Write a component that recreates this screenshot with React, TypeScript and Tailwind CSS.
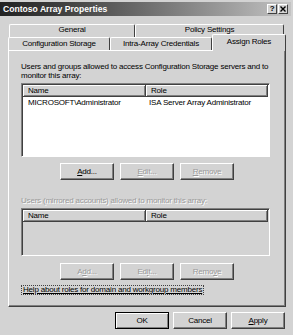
import React from "react";

const face = "bg-[#d3d3d3]";

type BtnProps = {
  children: React.ReactNode;
  disabled?: boolean;
  isDefault?: boolean;
};

const Btn = ({ children, disabled, isDefault }: BtnProps) => {
  const frame = isDefault
    ? "border border-black shadow-[inset_1px_1px_#fff,inset_-1px_-1px_#808080]"
    : "border border-t-white border-l-white border-r-[#404040] border-b-[#404040] shadow-[inset_-1px_-1px_#808080]";
  return (
    <div
      className={`w-[54px] h-[17px] ${face} ${frame} flex items-center justify-center leading-none ${
        disabled ? "text-[#9a9a9a] [text-shadow:1px_1px_0_#fff]" : "text-black"
      }`}
    >
      {children}
    </div>
  );
};

const U = ({ children }: { children: React.ReactNode }) => (
  <span className="underline underline-offset-1">{children}</span>
);

const HeaderCell = ({ label, w }: { label: string; w: string }) => (
  <div
    className={`${w} h-[12px] ${face} border-r border-b border-r-[#404040] border-b-[#404040] shadow-[inset_1px_1px_#fff,inset_-1px_-1px_#808080] flex items-center pl-[5px] leading-none`}
  >
    {label}
  </div>
);

const ListView = ({
  h,
  white,
  rows,
}: {
  h: string;
  white?: boolean;
  rows: [string, string][];
}) => (
  <div
    className={`w-[249px] ${h} border border-t-[#808080] border-l-[#808080] border-r-white border-b-white shadow-[inset_1px_1px_#404040] p-[1px] ${
      white ? "bg-white" : face
    }`}
  >
    <div className="flex">
      <HeaderCell label="Name" w="w-[123px]" />
      <HeaderCell label="Role" w="w-[122px]" />
    </div>
    {rows.map(([name, role]) => (
      <div key={name} className="flex h-[11px] items-center leading-none">
        <div className="w-[123px] pl-[5px]">{name}</div>
        <div className="pl-[3px]">{role}</div>
      </div>
    ))}
  </div>
);

const Tab = ({ label, w, h = "h-[13px]" }: { label: string; w: string; h?: string }) => (
  <div
    className={`${w} ${h} ${face} border-t border-l border-r border-t-white border-l-white border-r-[#404040] rounded-t-[2px] flex items-center justify-center leading-none`}
  >
    {label}
  </div>
);

export default function App() {
  return (
    <div
      className={`w-[293px] h-[335px] ${face} pt-[2px] overflow-hidden font-['Liberation_Sans',Arial,sans-serif] text-[8px] tracking-[-0.2px] text-black`}
    >
      {/* title bar */}
      <div className="h-[14px] w-[291px] bg-linear-to-r from-[#222222] to-[#c4c4c4] flex items-center justify-between pl-[3px] pr-[3px]">
        <span className="text-white font-bold text-[8.6px] tracking-normal leading-none">
          Contoso Array Properties
        </span>
        <div className="flex gap-[1px]">
          <div className={`w-[10px] h-[10px] ${face} border border-t-white border-l-white border-r-[#404040] border-b-[#404040] flex items-center justify-center text-[8px] font-bold leading-none`}>
            ?
          </div>
          <div className={`w-[10px] h-[10px] ${face} border border-t-white border-l-white border-r-[#404040] border-b-[#404040] flex items-center justify-center`}>
            <svg width="6" height="6" viewBox="0 0 6 6">
              <path d="M0.5 0.5 L5.5 5.5 M5.5 0.5 L0.5 5.5" stroke="#000" strokeWidth="1.4" />
            </svg>
          </div>
        </div>
      </div>

      {/* tabs, back row */}
      <div className="mt-[8px] ml-[9px] flex">
        <Tab label="General" w="w-[126px]" h="h-[13px] pb-[3px]" />
        <Tab label="Policy Settings" w="w-[149px]" h="h-[13px] pb-[3px]" />
      </div>
      {/* tabs, front row */}
      <div className="ml-[8px] flex items-end h-[13px]">
        <Tab label="Configuration Storage" w="w-[102px]" />
        <Tab label="Intra-Array Credentials" w="w-[102px]" />
        <div className="relative z-10 -mb-[1px]">
          <Tab label="Assign Roles" w="w-[74px]" h="h-[17px] pb-[3px]" />
        </div>
      </div>

      {/* panel */}
      <div className="ml-[8px] w-[278px] h-[257px] border border-t-white border-l-white border-r-[#404040] border-b-[#404040] shadow-[inset_-1px_-1px_#808080] pl-[12px] pt-[11px]">
        <p className="leading-[9px]">
          Users and groups allowed to access Configuration Storage servers and to
          <br />
          monitor this array:
        </p>
        <div className="mt-[3px]">
          <ListView
            h="h-[74px]"
            white
            rows={[["MICROSOFT\\Administrator", "ISA Server Array Administrator"]]}
          />
        </div>
        <div className="mt-[6px] -ml-[12px] flex justify-center gap-[6px]">
          <Btn>
            <U>A</U>dd...
          </Btn>
          <Btn disabled>
            <U>E</U>dit...
          </Btn>
          <Btn disabled>
            <U>R</U>emove
          </Btn>
        </div>
        <p className="mt-[16px] leading-[9px] text-[#9a9a9a] [text-shadow:1px_1px_0_#fff]">
          Users (mirrored accounts) allowed to monitor this array:
        </p>
        <div className="mt-[3px]">
          <ListView h="h-[48px]" rows={[]} />
        </div>
        <div className="mt-[7px] -ml-[12px] flex justify-center gap-[6px]">
          <Btn disabled>
            A<U>d</U>d...
          </Btn>
          <Btn disabled>
            Ed<U>i</U>t...
          </Btn>
          <Btn disabled>
            Remo<U>v</U>e
          </Btn>
        </div>
        <div className="mt-[5px] inline-block border border-dotted border-[#404040] px-[1px] h-[10px] leading-[8px] underline underline-offset-1">
          Help about roles for domain and workgroup members
        </div>
      </div>

      {/* dialog buttons */}
      <div className="mt-[5px] flex justify-end gap-[4px] w-[285px]">
        <Btn isDefault>OK</Btn>
        <Btn>Cancel</Btn>
        <Btn>
          <U>A</U>pply
        </Btn>
      </div>
    </div>
  );
}
